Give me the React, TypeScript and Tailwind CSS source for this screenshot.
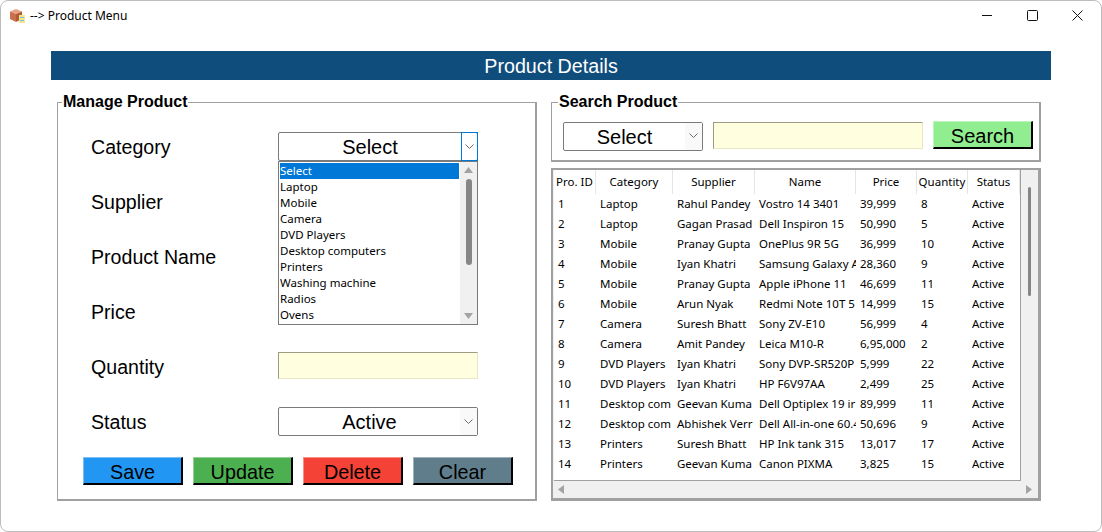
import React from "react";

const rows = [
  ["1", "Laptop", "Rahul Pandey", "Vostro 14 3401", "39,999", "8", "Active"],
  ["2", "Laptop", "Gagan Prasad", "Dell Inspiron 15", "50,990", "5", "Active"],
  ["3", "Mobile", "Pranay Gupta", "OnePlus 9R 5G", "36,999", "10", "Active"],
  ["4", "Mobile", "Iyan Khatri", "Samsung Galaxy A", "28,360", "9", "Active"],
  ["5", "Mobile", "Pranay Gupta", "Apple iPhone 11", "46,699", "11", "Active"],
  ["6", "Mobile", "Arun Nyak", "Redmi Note 10T 5", "14,999", "15", "Active"],
  ["7", "Camera", "Suresh Bhatt", "Sony ZV-E10", "56,999", "4", "Active"],
  ["8", "Camera", "Amit Pandey", "Leica M10-R", "6,95,000", "2", "Active"],
  ["9", "DVD Players", "Iyan Khatri", "Sony DVP-SR520P", "5,999", "22", "Active"],
  ["10", "DVD Players", "Iyan Khatri", "HP F6V97AA", "2,499", "25", "Active"],
  ["11", "Desktop com", "Geevan Kuma", "Dell Optiplex 19 ir", "89,999", "11", "Active"],
  ["12", "Desktop com", "Abhishek Verr", "Dell All-in-one 60.4", "50,696", "9", "Active"],
  ["13", "Printers", "Suresh Bhatt", "HP Ink tank 315", "13,017", "17", "Active"],
  ["14", "Printers", "Geevan Kuma", "Canon PIXMA", "3,825", "15", "Active"],
];

const cols = [
  { name: "Pro. ID", w: "w-[42px]" },
  { name: "Category", w: "w-[77px]" },
  { name: "Supplier", w: "w-[82px]" },
  { name: "Name", w: "w-[101px]" },
  { name: "Price", w: "w-[61px]" },
  { name: "Quantity", w: "w-[51px]" },
  { name: "Status", w: "w-[52px]" },
];

const options = ["Select", "Laptop", "Mobile", "Camera", "DVD Players", "Desktop computers", "Printers", "Washing machine", "Radios", "Ovens"];

const ui = { fontFamily: '"Noto Sans", sans-serif' };

function Chevron({ className = "" }: { className?: string }) {
  return (
    <svg width="9" height="6" viewBox="0 0 9 6" className={className} fill="none" stroke="#6b6b6b" strokeWidth="1">
      <path d="M0.5 0.5 L4.5 4.5 L8.5 0.5" />
    </svg>
  );
}

function ComboBox({ label, width = "w-[200px]", focused = false, className = "", labelClass = "" }: { label: string; width?: string; focused?: boolean; className?: string; labelClass?: string }) {
  return (
    <div className={`${width} ${className} h-[29px] bg-white border border-[#7a7a7a] rounded-[2px] flex items-center text-[20px] text-black`}>
      <div className={`flex-1 text-center leading-none ${labelClass}`}>{label}</div>
      {focused ? (
        <div className="w-[17px] h-[29px] -mr-px border border-[#0078d7] flex items-center justify-center">
          <Chevron />
        </div>
      ) : (
        <div className="w-[17px] h-[27px] bg-[#f9f9f9] flex items-center justify-center">
          <Chevron />
        </div>
      )}
    </div>
  );
}

function TextBox({ className = "" }: { className?: string }) {
  return <div className={`h-[27px] bg-[#ffffe0] border border-[#e8e8c4] border-t-[#9c9c84] border-l-[#9c9c84] ${className}`} />;
}

function FormRow({ label, children }: { label: string; children?: React.ReactNode }) {
  return (
    <div className="h-[55px] flex items-center">
      <div className="w-[187px] pt-[2px] text-[19.6px] leading-none text-black">{label}</div>
      {children}
    </div>
  );
}

function ActionButton({ label, color }: { label: string; color: string }) {
  return (
    <div className={`w-[100px] h-[28px] ${color} pt-[4px] border-l border-t border-white/40 border-r-2 border-b-2 border-r-black border-b-black flex items-center justify-center text-[19.8px] leading-none text-black`}>
      {label}
    </div>
  );
}

function Triangle({ dir }: { dir: "up" | "down" | "left" | "right" }) {
  const pts = {
    up: "0,6 4.5,0 9,6",
    down: "0,0 4.5,6 9,0",
    left: "6,0 0,4.5 6,9",
    right: "0,0 6,4.5 0,9",
  }[dir];
  const horiz = dir === "left" || dir === "right";
  return (
    <svg width={horiz ? 6 : 9} height={horiz ? 9 : 6} viewBox={horiz ? "0 0 6 9" : "0 0 9 6"}>
      <polygon points={pts} fill="#a3a3a3" />
    </svg>
  );
}

export default function App() {
  return (
    <div className="w-[1102px] h-[532px] bg-white border border-[#bdbdbd] rounded-t-[8px] rounded-b-[8px] overflow-hidden flex flex-col" style={{ fontFamily: '"Liberation Sans", Arial, sans-serif' }}>
      {/* title bar */}
      <div className="h-[29px] shrink-0 flex items-center pl-[8px] text-black" style={ui}>
        <svg width="16" height="16" viewBox="0 0 16 16" className="mr-[5px]">
          <polygon points="7,1 13,3.5 7,6 1,3.5" fill="#e8a283" />
          <polygon points="1,3.5 7,6 7,14 1,11" fill="#c9704c" />
          <polygon points="7,6 13,3.5 13,11 7,14" fill="#b4583a" />
          <rect x="10" y="7" width="6" height="8" fill="#f5e68a" />
          <rect x="11" y="9" width="4" height="1" fill="#6fc0d8" />
          <rect x="11" y="12" width="4" height="1" fill="#6fc0d8" />
        </svg>
        <span className="text-[12px] pt-[1px]">--&gt; Product Menu</span>
        <div className="ml-auto flex items-center">
          <svg width="11" height="11" viewBox="0 0 11 11" className="mr-[34px]" stroke="#111" fill="none"><path d="M0 5.5 H10" /></svg>
          <svg width="11" height="11" viewBox="0 0 11 11" className="mr-[34px]" stroke="#111" fill="none"><rect x="0.5" y="0.5" width="10" height="10" rx="1" /></svg>
          <svg width="11" height="11" viewBox="0 0 11 11" className="mr-[18px]" stroke="#111" fill="none"><path d="M0.5 0.5 L10.5 10.5 M10.5 0.5 L0.5 10.5" /></svg>
        </div>
      </div>

      <div className="flex-1 pl-[50px] pr-[50px]">
        {/* header */}
        <div className="mt-[21px] h-[29px] pt-[2px] bg-[#0f4d7d] flex items-center justify-center text-white text-[19.7px] leading-none">
          Product Details
        </div>

        <div className="mt-[22px] flex">
          {/* manage product */}
          <div className="relative ml-[6px] w-[480px] h-[399px] border border-[#a0a0a0] border-b-2 border-r-2 pl-[33px]">
            <div className="absolute left-[4px] -top-[10px] bg-white px-px text-[16px] leading-[18px] font-bold text-black">Manage Product</div>
            <div className="pt-[16px]">
              <FormRow label="Category">
                <ComboBox label="Select" focused />
              </FormRow>
              <FormRow label="Supplier">
                <ComboBox label="Select" />
              </FormRow>
              <FormRow label="Product Name">
                <TextBox className="w-[200px] -mt-[2px]" />
              </FormRow>
              <FormRow label="Price">
                <TextBox className="w-[200px] -mt-[2px]" />
              </FormRow>
              <FormRow label="Quantity">
                <TextBox className="w-[200px] -mt-[2px]" />
              </FormRow>
              <FormRow label="Status">
                <ComboBox label="Active" />
              </FormRow>
            </div>
            <div className="mt-[8px] -ml-[8px] flex gap-[10px]">
              <ActionButton label="Save" color="bg-[#2196f3]" />
              <ActionButton label="Update" color="bg-[#4caf50]" />
              <ActionButton label="Delete" color="bg-[#f44336]" />
              <ActionButton label="Clear" color="bg-[#607d8b]" />
            </div>

            {/* open dropdown */}
            <div className="absolute left-[220px] top-[58px] w-[200px] h-[164px] bg-white border border-[#7a7a7a] flex text-[11.5px] text-black" style={ui}>
              <div className="flex-1 pl-px pt-px">
                {options.map((o, i) => (
                  <div key={o} className={`h-[16px] leading-[16px] whitespace-nowrap ${i === 0 ? "bg-[#0078d7] text-white" : ""}`}>{o}</div>
                ))}
              </div>
              <div className="w-[17px] ml-px bg-[#f0f0f0] flex flex-col items-center pt-[5px] pb-[5px]">
                <Triangle dir="up" />
                <div className="w-[6px] h-[86px] mt-[6px] bg-[#868686] rounded-[3px]" />
                <div className="mt-auto"><Triangle dir="down" /></div>
              </div>
            </div>
          </div>

          {/* right column */}
          <div className="ml-[14px] w-[490px] flex flex-col">
            <div className="relative h-[60px] border border-[#a0a0a0] border-b-2 border-r-2 flex items-center pl-[11px] pt-[7px]">
              <div className="absolute left-[6px] -top-[10px] bg-white px-px text-[16px] leading-[18px] font-bold text-black">Search Product</div>
              <ComboBox label="Select" width="w-[140px]" className="mt-[2px]" labelClass="pt-[2px]" />
              <TextBox className="w-[210px] ml-[10px]" />
              <div className="ml-[10px]">
                <div className="w-[100px] h-[28px] pt-[2px] bg-[#90ee90] border-l border-t border-white/40 border-r-2 border-b-2 border-r-black border-b-black flex items-center justify-center text-[20px] leading-none text-black">Search</div>
              </div>
            </div>

            {/* table frame */}
            <div className="mt-[6px] h-[333px] border-2 border-[#a0a0a0] border-b-[3px] border-r-[3px] bg-[#f0f0f0] flex flex-col text-[11.5px] text-black" style={ui}>
              <div className="flex flex-1 min-h-0">
                <div className="w-[467px] ml-px bg-white border-r border-b border-[#a0a0a0]">
                  <div className="flex h-[24px]">
                    {cols.map((c) => (
                      <div key={c.name} className={`${c.w} shrink-0 text-center leading-[24px] border-r border-[#e5e5e5] overflow-hidden whitespace-nowrap`}>{c.name}</div>
                    ))}
                  </div>
                  {rows.map((r) => (
                    <div key={r[0]} className="flex h-[20px]">
                      {r.map((v, i) => (
                        <div key={i} className={`${cols[i].w} shrink-0 pl-[4px] leading-[20px] overflow-hidden whitespace-nowrap`}>{v}</div>
                      ))}
                    </div>
                  ))}
                </div>
                <div className="flex-1 flex justify-center pt-[17px]">
                  <div className="w-[3px] h-[109px] bg-[#868686] rounded-[2px]" />
                </div>
              </div>
              <div className="h-[17px] flex items-center justify-between px-[5px] pr-[6px]">
                <Triangle dir="left" />
                <Triangle dir="right" />
              </div>
            </div>
          </div>
        </div>
      </div>
    </div>
  );
}
